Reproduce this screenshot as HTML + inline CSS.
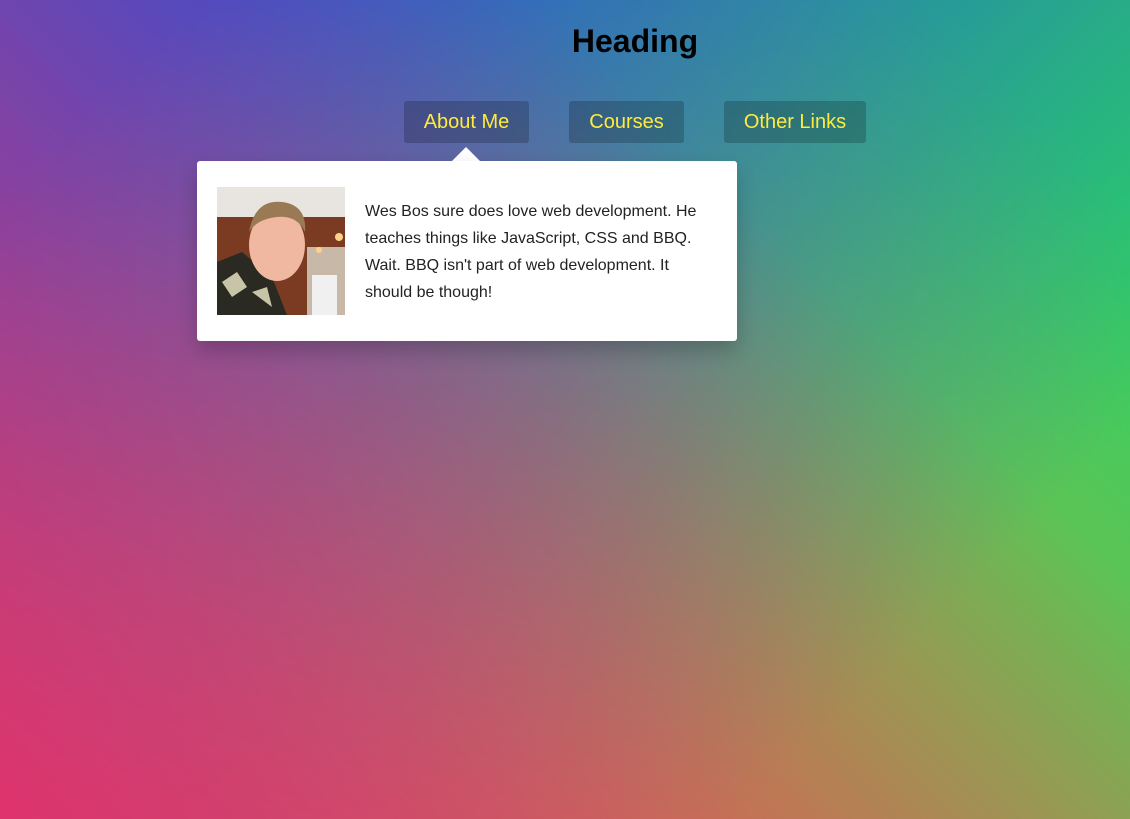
<!DOCTYPE html>
<html><head><style>
html,body{margin:0;height:819px;width:1130px;overflow:hidden}
body{font-family:"Liberation Sans",sans-serif;position:relative;
background:
linear-gradient(45deg,hsla(340,100%,55%,1) 0%,hsla(340,100%,55%,0) 70%),
linear-gradient(135deg,hsla(225,95%,50%,1) 10%,hsla(225,95%,50%,0) 80%),
linear-gradient(225deg,hsla(140,90%,50%,1) 10%,hsla(140,90%,50%,0) 80%),
linear-gradient(315deg,hsla(35,95%,55%,1) 100%,hsla(35,95%,55%,0) 70%);}
.ov{position:absolute;inset:0;background:rgba(128,128,128,0.25)}
h2{position:absolute;left:535px;width:200px;text-align:center;top:22px;margin:0;font-size:32px;line-height:38px;color:#000}
.btn{position:absolute;top:101px;height:42px;line-height:42px;text-align:center;background:rgba(0,0,0,0.2);color:#ffeb3b;font-size:20px;border-radius:3px}
.dd{position:absolute;left:197px;top:161px;width:540px;height:180px;background:#fff;border-radius:3px;box-shadow:0 10px 20px rgba(0,0,0,0.2)}
.arrow{position:absolute;left:452px;top:147px;width:0;height:0;border:14px solid transparent;border-top:0;border-bottom:14px solid #fff}
.txt{position:absolute;left:168px;top:37px;width:345px;font-size:16px;line-height:27px;color:#222}
svg{position:absolute;left:20px;top:26px}
</style></head><body>
<div class="ov"></div>
<h2>Heading</h2>
<div class="btn" style="left:404px;width:125px">About Me</div>
<div class="btn" style="left:569px;width:115px">Courses</div>
<div class="btn" style="left:724px;width:142px">Other Links</div>
<div class="arrow"></div>
<div class="dd">
<svg width="128" height="128" viewBox="0 0 128 128">
<rect width="128" height="128" fill="#7a3b22"/>
<rect width="128" height="30" fill="#e8e4e0"/>
<rect x="90" y="60" width="38" height="68" fill="#c8b8a8"/>
<rect x="95" y="88" width="25" height="40" fill="#f0f0f0"/>
<circle cx="122" cy="50" r="4" fill="#ffd08a"/>
<circle cx="102" cy="63" r="3" fill="#ffd08a"/>
<path d="M0 128 L0 75 L25 65 L55 90 L70 128Z" fill="#2a2a22"/>
<path d="M5 95 L20 85 L30 100 L15 110Z M35 105 L50 100 L55 120Z" fill="#c8c4a8"/>
<ellipse cx="60" cy="58" rx="28" ry="36" fill="#f0b8a0"/>
<path d="M32 45 Q38 12 65 15 Q90 18 88 45 Q80 28 60 30 Q40 32 32 45Z" fill="#9a7a55"/>
</svg>
<div class="txt">Wes Bos sure does love web development. He teaches things like JavaScript, CSS and BBQ. Wait. BBQ isn't part of web development. It should be though!</div>
</div>
</body></html>
